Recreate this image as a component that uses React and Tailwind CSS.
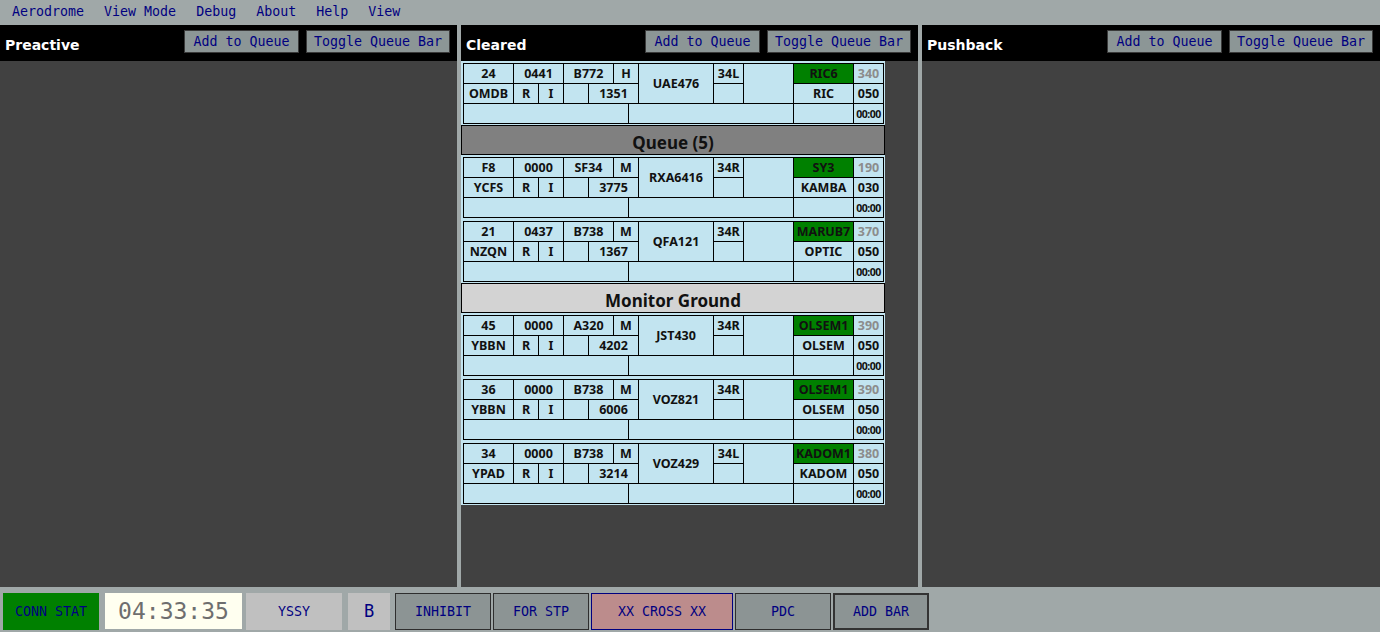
import React from "react";

const mono = { fontFamily: '"DejaVu Sans Mono", "Liberation Mono", monospace' };
const sans = { fontFamily: '"Noto Sans", "DejaVu Sans", sans-serif' };
const title = { fontFamily: '"DejaVu Sans", "Noto Sans", sans-serif' };

const strips = [
  { a: "24", sq: "0441", t: "B772", w: "H", cs: "UAE476", rwy: "34L", sid: "RIC6", lvl: "340", dep: "OMDB", num: "1351", fix: "RIC", hdg: "050" },
  { a: "F8", sq: "0000", t: "SF34", w: "M", cs: "RXA6416", rwy: "34R", sid: "SY3", lvl: "190", dep: "YCFS", num: "3775", fix: "KAMBA", hdg: "030" },
  { a: "21", sq: "0437", t: "B738", w: "M", cs: "QFA121", rwy: "34R", sid: "MARUB7", lvl: "370", dep: "NZQN", num: "1367", fix: "OPTIC", hdg: "050" },
];
const strips2 = [
  { a: "45", sq: "0000", t: "A320", w: "M", cs: "JST430", rwy: "34R", sid: "OLSEM1", lvl: "390", dep: "YBBN", num: "4202", fix: "OLSEM", hdg: "050" },
  { a: "36", sq: "0000", t: "B738", w: "M", cs: "VOZ821", rwy: "34R", sid: "OLSEM1", lvl: "390", dep: "YBBN", num: "6006", fix: "OLSEM", hdg: "050" },
  { a: "34", sq: "0000", t: "B738", w: "M", cs: "VOZ429", rwy: "34L", sid: "KADOM1", lvl: "380", dep: "YPAD", num: "3214", fix: "KADOM", hdg: "050" },
];

const cell = "bg-[#c2e4f0] flex items-center justify-center pt-px text-[12.5px] font-bold text-[#111] leading-none";

function Strip({ s }) {
  return (
    <div className="pl-[2px] pr-[1px] pt-[2px] pb-[1px]">
      <div
        className="grid w-[421px] bg-black p-px gap-px grid-cols-[49px_24px_24px_24px_24px_14px_9px_74px_29px_49px_59px_29px] grid-rows-[19px_19px_19px]"
        style={sans}
      >
        <div className={`${cell} col-start-1 row-start-1`}>{s.a}</div>
        <div className={`${cell} col-start-2 col-span-2 row-start-1`}>{s.sq}</div>
        <div className={`${cell} col-start-4 col-span-2 row-start-1`}>{s.t}</div>
        <div className={`${cell} col-start-6 col-span-2 row-start-1`}>{s.w}</div>
        <div className={`${cell} col-start-8 row-start-1 row-span-2`}>{s.cs}</div>
        <div className={`${cell} col-start-9 row-start-1`}>{s.rwy}</div>
        <div className={`${cell} col-start-10 row-start-1 row-span-2`}></div>
        <div className="col-start-11 row-start-1 bg-[#008000] flex items-center justify-center pt-px text-[12.5px] font-bold text-[#111] leading-none whitespace-nowrap">{s.sid}</div>
        <div className="col-start-12 row-start-1 bg-[#c2e4f0] flex items-center justify-center pt-px text-[12.5px] font-bold text-[#8c8c8c] leading-none">{s.lvl}</div>

        <div className={`${cell} col-start-1 row-start-2`}>{s.dep}</div>
        <div className={`${cell} col-start-2 row-start-2`}>R</div>
        <div className={`${cell} col-start-3 row-start-2`}>I</div>
        <div className={`${cell} col-start-4 row-start-2`}></div>
        <div className={`${cell} col-start-5 col-span-3 row-start-2`}>{s.num}</div>
        <div className={`${cell} col-start-9 row-start-2`}></div>
        <div className={`${cell} col-start-11 row-start-2`}>{s.fix}</div>
        <div className={`${cell} col-start-12 row-start-2`}>{s.hdg}</div>

        <div className={`${cell} col-start-1 col-span-6 row-start-3`}></div>
        <div className={`${cell} col-start-7 col-span-4 row-start-3`}></div>
        <div className={`${cell} col-start-11 row-start-3`}></div>
        <div className="col-start-12 row-start-3 bg-[#c2e4f0] flex items-center justify-center pt-px text-[10.5px] font-bold text-[#111] leading-none tracking-[-0.5px]">00:00</div>
      </div>
    </div>
  );
}

function SectionHeader({ label, bg }) {
  return (
    <div
      className={`h-[30px] border border-black flex items-center justify-center pt-[5px] text-[17px] font-bold text-[#111] leading-none ${bg}`}
      style={sans}
    >
      {label}
    </div>
  );
}

function HeaderButton({ children, w }) {
  return (
    <div
      className={`h-[23px] ${w} bg-[#8c9696] border border-[#3a3a3a] flex items-center justify-center text-[13.3px] text-[#000080] leading-none`}
      style={mono}
    >
      {children}
    </div>
  );
}

function ColumnHeader({ name }) {
  return (
    <div className="h-[36px] bg-black flex items-start pl-[5px] pr-[7px]">
      <div className="mt-[12px] text-[14px] font-bold text-white leading-[17px]" style={title}>
        {name}
      </div>
      <div className="ml-auto mt-[5px] flex gap-[7px]">
        <HeaderButton w="w-[115px]">Add to Queue</HeaderButton>
        <HeaderButton w="w-[144px]">Toggle Queue Bar</HeaderButton>
      </div>
    </div>
  );
}

function BottomBtn({ children, cls }) {
  return (
    <div
      className={`h-[37px] flex items-center justify-center leading-none ${cls}`}
      style={mono}
    >
      {children}
    </div>
  );
}

export default function App() {
  return (
    <div className="w-[1380px] h-[632px] flex flex-col bg-[#a0a8a8] overflow-hidden">
      <div className="h-[25px] flex items-center pl-[2px] pb-[1px] text-[13.3px] text-[#000080]" style={mono}>
        {["Aerodrome", "View Mode", "Debug", "About", "Help", "View"].map((m) => (
          <div key={m} className="px-[10px] whitespace-pre">{m}</div>
        ))}
      </div>

      <div className="flex-1 flex gap-[4px] min-h-0">
        <div className="w-[457px] flex flex-col">
          <ColumnHeader name="Preactive" />
          <div className="flex-1 bg-[#414141]" />
        </div>
        <div className="w-[457px] flex flex-col">
          <ColumnHeader name="Cleared" />
          <div className="flex-1 bg-[#414141]">
            <div className="w-[424px] bg-[#c2e4f0]">
              <Strip s={strips[0]} />
              <SectionHeader label="Queue (5)" bg="bg-[#808080]" />
              <Strip s={strips[1]} />
              <Strip s={strips[2]} />
              <SectionHeader label="Monitor Ground" bg="bg-[#d3d3d3]" />
              {strips2.map((s) => (
                <Strip key={s.cs} s={s} />
              ))}
            </div>
          </div>
        </div>
        <div className="flex-1 flex flex-col">
          <ColumnHeader name="Pushback" />
          <div className="flex-1 bg-[#414141]" />
        </div>
      </div>

      <div className="h-[45px] flex items-start pt-[6px] pl-[3px]">
        <BottomBtn cls="w-[96px] bg-[#008000] text-[#000080] text-[13.3px]">CONN STAT</BottomBtn>
        <div
          className="ml-[6px] w-[137px] h-[36px] bg-[#fffff0] flex items-center justify-center text-[23px] text-[#6e6e6e] leading-none"
          style={mono}
        >
          04:33:35
        </div>
        <BottomBtn cls="ml-[4px] w-[96px] bg-[#c0c0c0] text-[#000080] text-[13.3px]">YSSY</BottomBtn>
        <BottomBtn cls="ml-[6px] w-[42px] bg-[#c0c0c0] text-[#000080] text-[17px]">B</BottomBtn>
        <BottomBtn cls="ml-[5px] w-[96px] bg-[#8c9494] border border-[#2e2e2e] text-[#000080] text-[13.3px]">INHIBIT</BottomBtn>
        <BottomBtn cls="ml-[2px] w-[96px] bg-[#8c9494] border border-[#2e2e2e] text-[#000080] text-[13.3px]">FOR STP</BottomBtn>
        <BottomBtn cls="ml-[2px] w-[142px] bg-[#bc8c8c] border border-[#000080] text-[#000080] text-[13.3px]">XX CROSS XX</BottomBtn>
        <BottomBtn cls="ml-[2px] w-[96px] bg-[#8c9494] border border-[#2e2e2e] text-[#000080] text-[13.3px]">PDC</BottomBtn>
        <BottomBtn cls="ml-[2px] w-[96px] bg-[#8c9494] border-2 border-[#333333] text-[#000080] text-[13.3px]">ADD BAR</BottomBtn>
      </div>
    </div>
  );
}
